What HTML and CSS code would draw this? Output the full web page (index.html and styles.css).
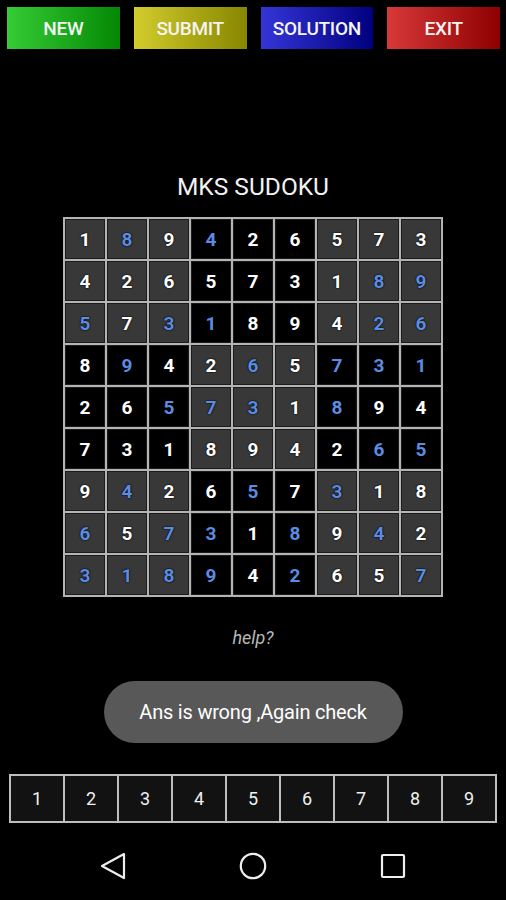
FILE: index.html
```html
<!DOCTYPE html>
<html lang="en">
<head>
  <meta charset="UTF-8" />
  <meta name="viewport" content="width=device-width, initial-scale=1.0"/>
  <title>MKS Sudoku</title>
  <link rel="stylesheet" href="styles.css">
</head>
<body>

  <div class="toolbar">
    <button class="btn btn-new">NEW</button>
    <button class="btn btn-submit">SUBMIT</button>
    <button class="btn btn-solution">SOLUTION</button>
    <button class="btn btn-exit">EXIT</button>
  </div>

  <h1 class="title">MKS SUDOKU</h1>

  <div class="board" id="board">
    <!-- cells are filled in by the script below -->
  </div>

  <div class="help">help?</div>

  <div class="toast">Ans is wrong ,Again check</div>

  <div class="numbar">
    <div class="num">1</div>
    <div class="num">2</div>
    <div class="num">3</div>
    <div class="num">4</div>
    <div class="num">5</div>
    <div class="num">6</div>
    <div class="num">7</div>
    <div class="num">8</div>
    <div class="num">9</div>
  </div>

  <nav class="navbar">
    <div class="nav-item">
      <svg width="28" height="30" viewBox="0 0 28 30">
        <path d="M25 3 L3 15 L25 27 Z" fill="none" stroke="#eee" stroke-width="2.2" stroke-linejoin="round"/>
      </svg>
    </div>
    <div class="nav-item">
      <svg width="30" height="30" viewBox="0 0 30 30">
        <circle cx="15" cy="15" r="12.2" fill="none" stroke="#eee" stroke-width="2.2"/>
      </svg>
    </div>
    <div class="nav-item">
      <svg width="28" height="28" viewBox="0 0 28 28">
        <rect x="3" y="3" width="22" height="22" rx="1" fill="none" stroke="#eee" stroke-width="2.2"/>
      </svg>
    </div>
  </nav>

  <script>
    // digit + 'b' = entered by player (blue), plain digit = given
    const rows = [
      '1 8b 9 4b 2 6 5 7 3',
      '4 2 6 5 7 3 1 8b 9b',
      '5b 7 3b 1b 8 9 4 2b 6b',
      '8 9b 4 2 6b 5 7b 3b 1b',
      '2 6 5b 7b 3b 1 8b 9 4',
      '7 3 1 8 9 4 2 6b 5b',
      '9 4b 2 6 5b 7 3b 1 8',
      '6b 5 7b 3b 1 8b 9 4b 2',
      '3b 1b 8b 9b 4 2b 6 5 7b'
    ];

    const board = document.getElementById('board');

    rows.forEach((row, r) => {
      row.split(' ').forEach((val, c) => {
        const cell = document.createElement('div');
        const box = Math.floor(r / 3) + Math.floor(c / 3);
        cell.className = 'cell ' + (box % 2 === 0 ? 'cell-gray' : 'cell-black');
        if (val.endsWith('b')) cell.classList.add('entered');
        cell.textContent = val[0];
        board.appendChild(cell);
      });
    });
  </script>

</body>
</html>
```

FILE: styles.css
```css
* { box-sizing: border-box; margin: 0; padding: 0; }
body {
  font-family: Roboto, 'Liberation Sans', sans-serif;
  background-color: #000;
  color: #fff;
  width: 506px;
  height: 900px;
  overflow: hidden;
}

.toolbar {
  display: flex;
  gap: 14px;
  padding: 7px 6px 0 7px;
}
.btn {
  flex: 1;
  height: 42px;
  border: none;
  color: #f4f4f4;
  font-family: Roboto, sans-serif;
  font-size: 19px;
  font-weight: 500;
  letter-spacing: -0.3px;
  cursor: pointer;
}
.btn-new      { background: linear-gradient(to right, #35cc35, #058805); }
.btn-submit   { background: linear-gradient(to right, #d2cc2c, #878600); }
.btn-solution { background: linear-gradient(to right, #3535d8, #00007f); }
.btn-exit     { background: linear-gradient(to right, #d83838, #8e0000); }

.title {
  margin-top: 124px;
  text-align: center;
  font-size: 24.5px;
  font-weight: normal;
  line-height: 28px;
  color: #f2f2f2;
}

.board {
  display: grid;
  grid-template-columns: repeat(9, 1fr);
  grid-auto-rows: 40px;
  gap: 2px;
  padding: 2px;
  width: 380px;
  margin: 16px auto 0;
  background: #b4b4b4;
}
.cell {
  display: flex;
  align-items: center;
  justify-content: center;
  font-size: 19px;
  font-weight: bold;
  color: #fff;
  text-shadow: 0 0 2px #000, 0 0 1px #000;
  border: 1px solid #1c1c1c;
}
.cell-gray  { background: #383838; }
.cell-black { background: #000; }
.cell.entered { color: #5b8ce2; }

.help {
  margin-top: 29px;
  text-align: center;
  font-size: 18px;
  font-style: italic;
  line-height: 24px;
  color: #b8b8b8;
}

.toast {
  width: 299px;
  height: 62px;
  margin: 31px auto 0;
  border-radius: 31px;
  background: #585858;
  display: flex;
  align-items: center;
  justify-content: center;
  font-size: 20px;
  color: #fff;
  letter-spacing: -0.2px;
}

.numbar {
  display: grid;
  grid-template-columns: repeat(9, 1fr);
  width: 488px;
  height: 49px;
  margin: 31px auto 0;
  border: 1px solid #bdbdbd;
}
.num {
  display: flex;
  align-items: center;
  justify-content: center;
  background: #121212;
  border: 1px solid #bdbdbd;
  font-size: 18px;
  color: #f0f0f0;
}

.navbar {
  display: flex;
  justify-content: center;
  height: 48px;
  margin-top: 19px;
}
.nav-item {
  width: 140px;
  display: flex;
  align-items: center;
  justify-content: center;
}
```
